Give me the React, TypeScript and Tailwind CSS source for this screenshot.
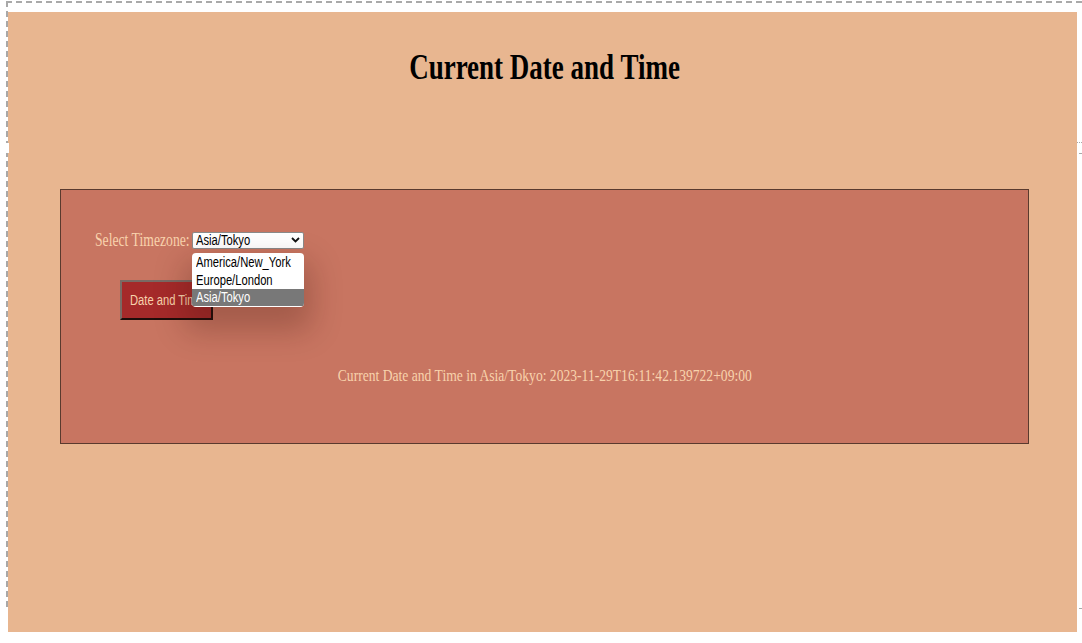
import React from "react";

const serif = { fontFamily: '"Liberation Serif", "Times New Roman", serif' };
const sans = { fontFamily: '"Liberation Sans", Arial, sans-serif' };

export default function App() {
  return (
    <div className="relative w-[1082px] h-[643px] bg-white overflow-hidden">
      <div className="pt-px pl-[6px]">
        <div className="h-[606px] border-t-2 border-l-2 border-dashed border-[#a9a9a9]">
          <div className="mt-[9px] w-[1069px] h-[620px] bg-[#e8b690]" style={serif}>
            <div className="ml-[52px] w-[969px] pt-[35px] flex justify-center">
              <h1 className="inline-block scale-x-[0.75] origin-center text-[36px] leading-[41px] font-bold text-black whitespace-nowrap">
                Current Date and Time
              </h1>
            </div>
            <div className="ml-[52px] mt-[101px] w-[969px] h-[255px] border border-[#5a3a2e] bg-[#c87561]">
              <div className="pl-[34px] pt-[40px] flex items-center h-[60px]">
                <div className="w-[97px] h-[20px] flex items-center">
                  <span className="inline-block scale-x-[0.76] origin-left text-[18px] leading-[20px] text-[#f8d2ac] whitespace-nowrap">
                    Select Timezone:
                  </span>
                </div>
                <div className="relative">
                  <div
                    className="w-[112px] h-[17px] bg-white border border-[#8a8a8a] rounded-[2px] flex items-center justify-between pl-[3px] pr-[3px]"
                    style={sans}
                  >
                    <span className="inline-block scale-x-[0.8] origin-left text-[14px] leading-[15px] text-black whitespace-nowrap">
                      Asia/Tokyo
                    </span>
                    <svg width="9" height="6" viewBox="0 0 9 6" fill="none">
                      <path d="M1 1l3.5 3.5L8 1" stroke="#111" strokeWidth="1.8" />
                    </svg>
                  </div>
                  <div
                    className="absolute z-10 left-0 top-[21px] w-[112px] bg-white rounded-[4px] overflow-hidden pt-px pb-px shadow-[0_16px_30px_8px_rgba(60,20,10,0.26)]"
                    style={sans}
                  >
                    <div className="h-[17px] pl-[4px] flex items-center">
                      <span className="inline-block scale-x-[0.8] origin-left text-[14px] leading-[16px] text-black whitespace-nowrap">
                        America/New_York
                      </span>
                    </div>
                    <div className="h-[18px] pl-[4px] flex items-center">
                      <span className="inline-block scale-x-[0.8] origin-left text-[14px] leading-[16px] text-black whitespace-nowrap">
                        Europe/London
                      </span>
                    </div>
                    <div className="h-[17px] pl-[4px] flex items-center bg-[#787878]">
                      <span className="inline-block scale-x-[0.8] origin-left text-[14px] leading-[16px] text-white whitespace-nowrap">
                        Asia/Tokyo
                      </span>
                    </div>
                  </div>
                </div>
              </div>
              <div className="pl-[59px] pt-[30px]">
                <button
                  className="w-[93px] h-[40px] bg-[#a52a2a] border-2 border-t-[#7a6a64] border-l-[#7a6a64] border-b-[#1d0d0a] border-r-[#1d0d0a] pl-[8px] text-left overflow-hidden"
                  style={sans}
                >
                  <span className="inline-block scale-x-[0.8] origin-left text-[14px] leading-[16px] text-[#f8d2ac] whitespace-nowrap">
                    Date and Time
                  </span>
                </button>
              </div>
              <div className="mt-[46px] flex justify-center">
                <span className="inline-block scale-x-[0.8] origin-center text-[17px] leading-[20px] text-[#f8d2ac] whitespace-nowrap">
                  Current Date and Time in Asia/Tokyo: 2023-11-29T16:11:42.139722+09:00
                </span>
              </div>
            </div>
          </div>
        </div>
      </div>
      <div className="absolute left-[5px] top-[143px] w-[4px] h-[10px] bg-white" />
      <div className="absolute left-[1077px] top-[142px] w-[5px] border-t border-dotted border-[#a9a9a9]" />
      <div className="absolute left-[1079px] top-[153px] w-[3px] h-px bg-[#a9a9a9]" />
      <div className="absolute left-[1079px] top-[608px] w-[3px] h-px bg-[#a9a9a9]" />
    </div>
  );
}
